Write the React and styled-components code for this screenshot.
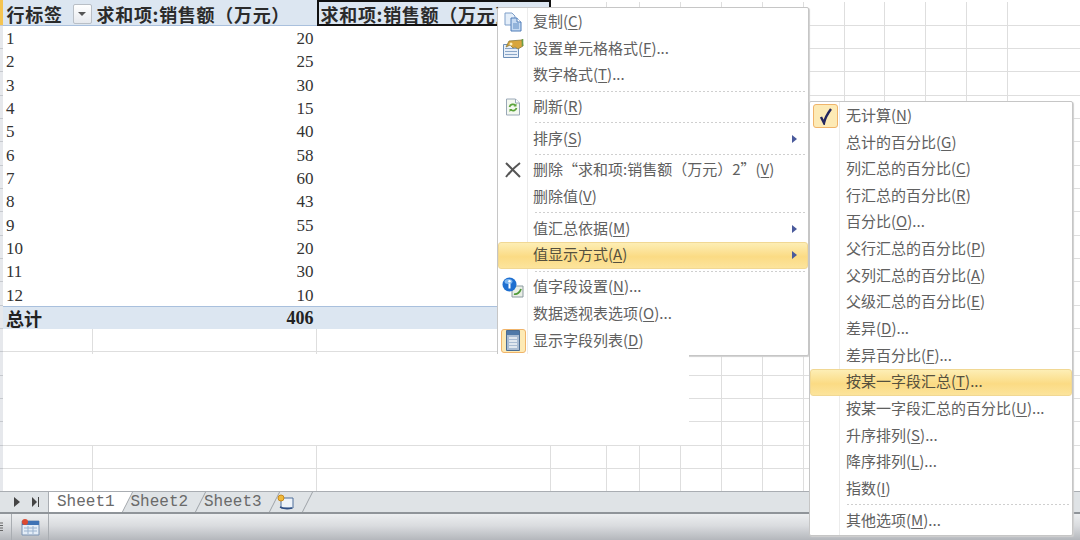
import { Fragment } from 'react';
import styled, { createGlobalStyle } from 'styled-components';

const GlobalStyle = createGlobalStyle`
	html, body {
		margin: 0;
		padding: 0;
		background: #fff;
	}
`;

const CJK = `'Noto Sans CJK SC', sans-serif`;
const SERIF = `'Liberation Serif', 'Noto Sans CJK SC', serif`;
const LINE = '#dedede';

const Page = styled.div`
	position: relative;
	width: 1080px;
	height: 540px;
	overflow: hidden;
	display: flex;
	flex-direction: column;
	background: #fff;
`;

const Sheet = styled.div`
	display: grid;
	grid-template-columns: 2.5px 90px 224px 234.5px 56px 33px 41px 41px 41px 41px 41px 40px 41px 41px 41px 80px 41px;
	grid-auto-rows: 23.35px;
	box-sizing: border-box;
	padding-top: 2.3px;
	height: 491px;
	overflow: hidden;
	flex: none;
`;

const Gutter = styled.div`
	background: ${p => (p.$active ? '#f5c451' : '#e6e8ec')};
	border-bottom: 1px solid #c6c9ce;
	box-sizing: border-box;
	${p => p.$active && 'margin-top: -2.3px;'}
`;

const Cell = styled.div`
	box-sizing: border-box;
	border-right: 1px solid ${LINE};
	border-bottom: 1px solid ${LINE};
`;

const PlainCell = styled.div`
	box-sizing: border-box;
	display: flex;
	align-items: flex-end;
	justify-content: ${p => (p.$right ? 'flex-end' : 'flex-start')};
	padding: 0 3px 0 3.5px;
	font: 17px/20px ${SERIF};
	color: #333;
`;

const HeadCell = styled.div`
	box-sizing: border-box;
	margin-top: -2.3px;
	display: flex;
	align-items: center;
	justify-content: space-between;
	padding: 3px 1px 0 4px;
	background: #dce6f1;
	border-bottom: 1px solid #a9c0dd;
	font: 600 18px/22px ${CJK};
	letter-spacing: 0.7px;
	color: #2b2b2b;
	white-space: nowrap;
`;

const SelectedHead = styled(HeadCell)`
	height: 26px;
	border: 2.5px solid #111;
	padding: 1px 0 0 2px;
	justify-content: flex-start;
`;

const FilterButton = styled.span`
	flex: none;
	width: 19px;
	height: 20px;
	box-sizing: border-box;
	border: 1px solid #b9bfc6;
	border-radius: 2px;
	background: linear-gradient(#ffffff, #e6e9ee);
	display: flex;
	align-items: center;
	justify-content: center;

	&::after {
		content: '';
		border-left: 4px solid transparent;
		border-right: 4px solid transparent;
		border-top: 4px solid #555;
	}
`;

const TotalCell = styled.div`
	box-sizing: border-box;
	display: flex;
	align-items: center;
	justify-content: ${p => (p.$right ? 'flex-end' : 'flex-start')};
	padding: 0 3px 0 3.5px;
	background: #dce6f1;
	border-top: 1px solid #a9c0dd;
	font: 700 18px/22px ${p => (p.$right ? SERIF : CJK)};
	color: #222;
`;

const ErasedPatch = styled.div`
	position: absolute;
	left: 3px;
	top: 354px;
	width: 686px;
	height: 90.5px;
	background: #fff;
`;

const TabBar = styled.div`
	flex: none;
	height: 23px;
	box-sizing: border-box;
	display: flex;
	align-items: stretch;
	background: #dfe3e6;
	border-top: 1px solid #a9adb2;
	border-bottom: 2px solid #8f9499;
	font: 16px/20px 'Liberation Mono', monospace;
	color: #6a6a6a;
`;

const TabNav = styled.div`
	width: 49px;
	box-sizing: border-box;
	display: flex;
	align-items: center;
	gap: 11px;
	padding-left: 13px;
	border-right: 1px solid #a9adb2;
	background: #dfe3e6;
`;

const Tab = styled.div`
	position: relative;
	width: 73.5px;
	box-sizing: border-box;
	padding-left: 8px;
	background: ${p => (p.$active ? '#fff' : 'transparent')};
	white-space: nowrap;

	&::after {
		content: '';
		position: absolute;
		top: 0;
		bottom: 0;
		right: -5px;
		width: 10px;
		transform: skewX(-27deg);
		border-right: 1px solid #9ea3a8;
		background: ${p => (p.$active ? '#fff' : 'transparent')};
		z-index: 0;
	}
`;

const TabName = styled.span`
	position: relative;
	z-index: 1;
`;

const NewTab = styled.div`
	position: relative;
	width: 28px;
	display: flex;
	align-items: center;
	padding-left: 7px;

	&::after {
		content: '';
		position: absolute;
		top: 0;
		bottom: 0;
		right: -3px;
		width: 10px;
		transform: skewX(-27deg);
		border-right: 1px solid #9ea3a8;
	}
`;

const StatusBar = styled.div`
	flex: 1;
	display: flex;
	align-items: stretch;
	background: linear-gradient(#eceef0, #dadcdf 45%, #b4b7bc);
`;

const StatusSlot = styled.div`
	width: ${p => p.$width}px;
	box-sizing: border-box;
	border-right: 1px solid #a9adb2;
	display: flex;
	align-items: center;
	justify-content: ${p => p.$justify || 'center'};
`;

const Menu = styled.div`
	position: absolute;
	left: ${p => p.$left}px;
	top: ${p => p.$top}px;
	width: ${p => p.$width}px;
	box-sizing: border-box;
	padding: 0.6px 1px 1px;
	background: #fff;
	border: 1px solid #c6c6c6;
	border-radius: 2px;
	box-shadow: 1px 1px 1px #d0d0d0;
	font: 15px/20px ${CJK};
	color: #606060;

	&::before {
		content: '';
		position: absolute;
		top: 0;
		bottom: 0;
		left: 28.5px;
		width: 1px;
		background: #ececec;
	}
`;

const Item = styled.div`
	position: relative;
	z-index: 1;
	height: ${p => p.$height}px;
	box-sizing: border-box;
	display: flex;
	align-items: center;
	white-space: nowrap;
	${p =>
		p.$hot &&
		`
		background: linear-gradient(#fdeeb5, #fbdb84 55%, #fce49c);
		border: 1px solid #f1d894;
		border-radius: 3px;
		margin: 0 -1px;
		color: #55503e;
	`}
`;

const IconSlot = styled.span`
	flex: none;
	width: ${p => p.$width}px;
	height: 100%;
	display: flex;
	align-items: center;
	justify-content: center;
`;

const CheckedBox = styled.span`
	width: 25px;
	height: 24px;
	box-sizing: border-box;
	border: 1px solid #f0b46a;
	border-radius: 3px;
	background: #fdeab5;
	display: flex;
	align-items: center;
	justify-content: center;
`;

const Label = styled.span`
	flex: 1;
	padding: 0 0 2px 6px;

	u {
		text-underline-offset: 2px;
	}
`;

const Arrow = styled.span`
	flex: none;
	margin-right: 10px;
	border-top: 4px solid transparent;
	border-bottom: 4px solid transparent;
	border-left: 5px solid #4a5a9c;
`;

const Separator = styled.div`
	height: 5px;
	margin-left: 36px;
	display: flex;
	align-items: center;

	&::after {
		content: '';
		flex: 1;
		height: 1px;
		background: repeating-linear-gradient(90deg, #cfcfcf 0 2px, transparent 2px 4px);
	}
`;

const CopyIcon = () => (
	<svg width="20" height="20" viewBox="0 0 20 20">
		<path d="M2 1h7l3 3v9H2z" fill="#e4eef9" stroke="#7f9fc9" />
		<path d="M8 6h6l4 4v9H8z" fill="#c5daf2" stroke="#4f7db8" />
		<path d="M14 6v4h4" fill="#fff" stroke="#4f7db8" />
		<path d="M10 12h6M10 14h6M10 16h6" stroke="#5f8cc2" />
	</svg>
);

const FormatIcon = () => (
	<svg width="22" height="20" viewBox="0 0 22 20">
		<path d="M1.5 5.5h15v13h-15z" fill="#e8eff8" stroke="#6d8fb8" />
		<path d="M3 9.5h12M3 12.5h12M3 15.5h12" stroke="#8aa6c8" />
		<path d="M4 8l3-6 13-1 1 6-5 3-3-2-2 1-3-3z" fill="#d9a63c" stroke="#8a7a3a" strokeWidth=".8" />
		<path d="M20.5 0v7" stroke="#6c9c48" strokeWidth="1.6" />
		<circle cx="9" cy="5" r="1.5" fill="#fff2c0" />
	</svg>
);

const RefreshIcon = () => (
	<svg width="16" height="18" viewBox="0 0 16 18">
		<path d="M1.5 1h9l4 4v12h-13z" fill="#f4f8f0" stroke="#9aa8b8" />
		<path d="M10.5 1v4h4" fill="#fff" stroke="#9aa8b8" />
		<path d="M4.5 9a3.5 3.5 0 0 1 6-1.5M11.5 10a3.5 3.5 0 0 1-6 1.5" fill="none" stroke="#5ba33a" strokeWidth="1.7" />
		<path d="M11.5 5.5v3h-3zM4.5 14v-3h3z" fill="#5ba33a" />
	</svg>
);

const DeleteIcon = () => (
	<svg width="18" height="16" viewBox="0 0 18 16">
		<path d="M2 1c3 3 10 10 14 14M16 1C12 4 6 10 2 15" fill="none" stroke="#555" strokeWidth="2" />
	</svg>
);

const InfoIcon = () => (
	<svg width="22" height="21" viewBox="0 0 22 21">
		<path d="M10 9h11v11H10z" fill="#e9eee6" stroke="#8b9aa0" />
		<path d="M12 17c3 1 6-2 7-5" fill="none" stroke="#4f9a38" strokeWidth="1.8" />
		<circle cx="7.5" cy="7.5" r="7" fill="#1e6fd0" />
		<ellipse cx="6.5" cy="4.5" rx="4" ry="2.5" fill="#7fb8f2" />
		<path d="M6.5 6.5h2v5h-2z" fill="#fff" />
		<circle cx="7.5" cy="4.2" r="1.2" fill="#fff" />
	</svg>
);

const FieldListIcon = () => (
	<svg width="14" height="21" viewBox="0 0 14 21">
		<path d="M.5.5h13v20H.5z" fill="#a9bcd2" stroke="#4b6c91" />
		<path d="M1 1h12v4H1z" fill="#4f79a8" />
		<path d="M3 8h8M3 11h8M3 14h8M3 17h8" stroke="#f2f5f8" strokeWidth="1.3" />
	</svg>
);

const CheckIcon = () => (
	<svg width="14" height="18" viewBox="0 0 14 18">
		<path d="M2 10l3 6c1-5 4-10 7-14" fill="none" stroke="#23265f" strokeWidth="2.4" />
	</svg>
);

const SheetPlayIcon = ({ end }) => (
	<svg width="8" height="10" viewBox="0 0 8 10">
		<path d={end ? 'M0 0l5 5-5 5z' : 'M1 0l6 5-6 5z'} fill="#444" />
		{end && <path d="M6.5 0v10" stroke="#444" />}
	</svg>
);

const InsertSheetIcon = () => (
	<svg width="18" height="16" viewBox="0 0 18 16">
		<path d="M4 4h12v10H4z" fill="#eef3f9" stroke="#4e6f9a" />
		<path d="M3 13c4 2 8 2 12 1" fill="none" stroke="#2f4f86" strokeWidth="1.6" />
		<circle cx="4" cy="4" r="3" fill="#f0b93a" stroke="#c88a1c" />
	</svg>
);

const RecordIcon = () => (
	<svg width="19" height="17" viewBox="0 0 19 17">
		<path d="M1 2h17v14H1z" fill="#e4edf7" stroke="#7b93b3" />
		<path d="M1 2h17v4H1z" fill="#3f73b5" />
		<path d="M3 9h13M3 12h13M7 7v8M12 7v8" stroke="#9bb3cf" />
		<circle cx="4" cy="3" r="3" fill="#dc4a32" />
	</svg>
);

const CutGlyphIcon = () => (
	<svg width="4" height="11" viewBox="0 0 4 11">
		<path d="M0 1h3M0 3.5h3M0 6h3M0 8.5h3" stroke="#666" />
	</svg>
);

const labelled = (text, key, tail = '') => (
	<>
		{text}(<u>{key}</u>){tail}
	</>
);

const contextItems = [
	{ text: '复制', key: 'C', icon: <CopyIcon /> },
	{ text: '设置单元格格式', key: 'F', tail: '...', icon: <FormatIcon /> },
	{ text: '数字格式', key: 'T', tail: '...' },
	{ sep: true },
	{ text: '刷新', key: 'R', icon: <RefreshIcon /> },
	{ sep: true },
	{ text: '排序', key: 'S', arrow: true },
	{ sep: true },
	{ text: '删除“求和项:销售额（万元）2”', key: 'V', icon: <DeleteIcon /> },
	{ text: '删除值', key: 'V' },
	{ sep: true },
	{ text: '值汇总依据', key: 'M', arrow: true },
	{ text: '值显示方式', key: 'A', arrow: true, hot: true },
	{ sep: true },
	{ text: '值字段设置', key: 'N', tail: '...', icon: <InfoIcon /> },
	{ text: '数据透视表选项', key: 'O', tail: '...' },
	{
		text: '显示字段列表',
		key: 'D',
		icon: (
			<CheckedBox>
				<FieldListIcon />
			</CheckedBox>
		),
	},
];

const showAsItems = [
	{
		text: '无计算',
		key: 'N',
		icon: (
			<CheckedBox>
				<CheckIcon />
			</CheckedBox>
		),
	},
	{ text: '总计的百分比', key: 'G' },
	{ text: '列汇总的百分比', key: 'C' },
	{ text: '行汇总的百分比', key: 'R' },
	{ text: '百分比', key: 'O', tail: '...' },
	{ text: '父行汇总的百分比', key: 'P' },
	{ text: '父列汇总的百分比', key: 'A' },
	{ text: '父级汇总的百分比', key: 'E' },
	{ text: '差异', key: 'D', tail: '...' },
	{ text: '差异百分比', key: 'F', tail: '...' },
	{ text: '按某一字段汇总', key: 'T', tail: '...', hot: true },
	{ text: '按某一字段汇总的百分比', key: 'U', tail: '...' },
	{ text: '升序排列', key: 'S', tail: '...' },
	{ text: '降序排列', key: 'L', tail: '...' },
	{ text: '指数', key: 'I' },
	{ sep: true },
	{ text: '其他选项', key: 'M', tail: '...' },
];

const MenuList = ({ items, left, top, width, slot, itemHeight }) => (
	<Menu $left={left} $top={top} $width={width}>
		{items.map((item, i) =>
			item.sep ? (
				<Separator key={i} />
			) : (
				<Item key={i} $hot={item.hot} $height={itemHeight}>
					<IconSlot $width={slot}>{item.icon}</IconSlot>
					<Label>{labelled(item.text, item.key, item.tail)}</Label>
					{item.arrow && <Arrow />}
				</Item>
			)
		)}
	</Menu>
);

const values = [20, 25, 30, 15, 40, 58, 60, 43, 55, 20, 30, 10];
const COLS_RIGHT = 13;
const restCells = key =>
	Array.from({ length: COLS_RIGHT }, (_, i) => <Cell key={`${key}-${i}`} />);

export default function App() {
	return (
		<Page lang="zh-CN">
			<GlobalStyle />
			<Sheet>
				<Gutter $active />
				<HeadCell>
					行标签
					<FilterButton />
				</HeadCell>
				<HeadCell>求和项:销售额（万元）</HeadCell>
				<SelectedHead>求和项:销售额（万元）2</SelectedHead>
				{restCells('head')}

				{values.map((value, i) => (
					<Fragment key={i}>
						<Gutter />
						<PlainCell>{i + 1}</PlainCell>
						<PlainCell $right>{value}</PlainCell>
						<PlainCell />
						{restCells(i)}
					</Fragment>
				))}

				<Gutter />
				<TotalCell>总计</TotalCell>
				<TotalCell $right>406</TotalCell>
				<TotalCell />
				{restCells('total')}

				{Array.from({ length: 7 }, (_, row) => (
					<Fragment key={row}>
						<Gutter />
						<Cell />
						<Cell />
						<Cell />
						{restCells(`blank-${row}`)}
					</Fragment>
				))}
			</Sheet>

			<TabBar>
				<TabNav>
					<SheetPlayIcon />
					<SheetPlayIcon end />
				</TabNav>
				<Tab $active>
					<TabName>Sheet1</TabName>
				</Tab>
				<Tab>
					<TabName>Sheet2</TabName>
				</Tab>
				<Tab>
					<TabName>Sheet3</TabName>
				</Tab>
				<NewTab>
					<InsertSheetIcon />
				</NewTab>
			</TabBar>

			<StatusBar>
				<StatusSlot $width={12} $justify="flex-start">
					<CutGlyphIcon />
				</StatusSlot>
				<StatusSlot $width={37}>
					<RecordIcon />
				</StatusSlot>
			</StatusBar>

			<MenuList items={contextItems} left={497} top={7} width={312} slot={28} itemHeight={26.7} />
			<MenuList items={showAsItems} left={809} top={101} width={263.5} slot={29} itemHeight={26.65} />

			<ErasedPatch />
		</Page>
	);
}
